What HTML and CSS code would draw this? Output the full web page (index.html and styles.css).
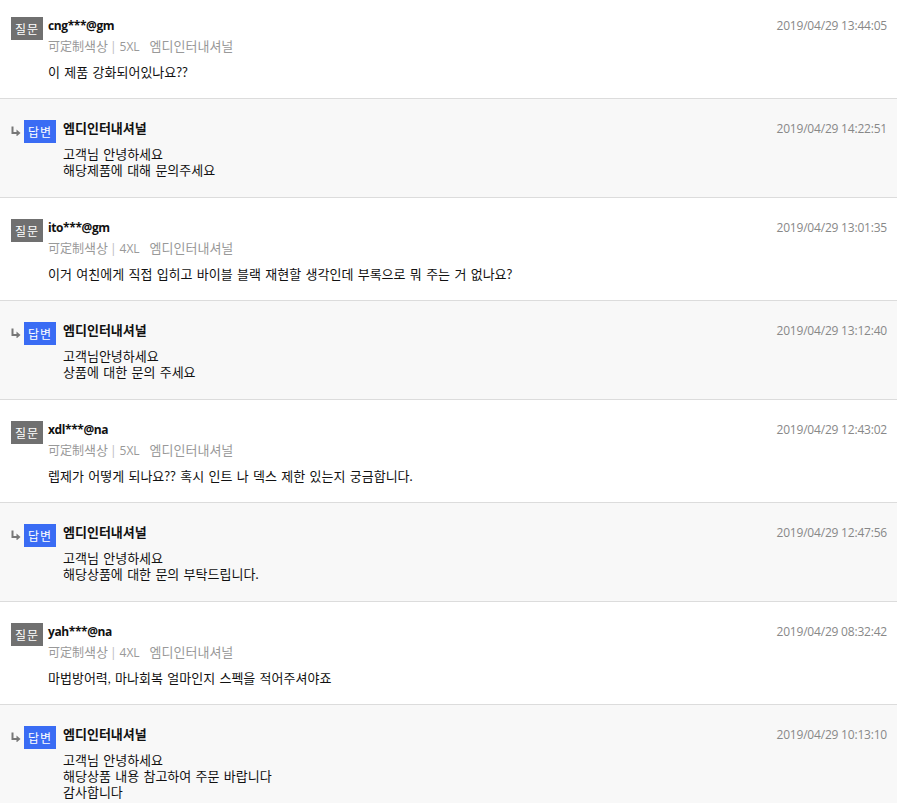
FILE: index.html
```html
<!DOCTYPE html>
<html lang="ko">
<head>
<meta charset="utf-8">
<title>Q&amp;A</title>
<link rel="stylesheet" href="styles.css">
</head>
<body>
<ul class="qna-list">
  <li class="item question">
    <span class="badge badge-q">질문</span>
    <div class="body">
      <div class="head"><span class="user">cng***@gm</span><span class="date">2019/04/29 13:44:05</span></div>
      <div class="meta">可定制<span class="ko">색상</span><span class="bar">|</span><span class="size">5XL</span><span class="ko brand">엠디인터내셔널</span></div>
      <p class="content">이 제품 강화되어있나요??</p>
    </div>
  </li>
  <li class="item answer">
    <span class="arrow"><svg width="10" height="10" viewBox="0 0 10 10"><path d="M1.5 0.5V7H6" fill="none" stroke="#777" stroke-width="2"/><path d="M5.5 3.5L9.5 7L5.5 10.5Z" fill="#777"/></svg></span>
    <span class="badge badge-a">답변</span>
    <div class="body">
      <div class="head"><span class="user">엠디인터내셔널</span><span class="date">2019/04/29 14:22:51</span></div>
      <p class="content">고객님 안녕하세요<br>해당제품에 대해 문의주세요</p>
    </div>
  </li>
  <li class="item question">
    <span class="badge badge-q">질문</span>
    <div class="body">
      <div class="head"><span class="user">ito***@gm</span><span class="date">2019/04/29 13:01:35</span></div>
      <div class="meta">可定制<span class="ko">색상</span><span class="bar">|</span><span class="size">4XL</span><span class="ko brand">엠디인터내셔널</span></div>
      <p class="content">이거 여친에게 직접 입히고 바이블 블랙 재현할 생각인데 부록으로 뭐 주는 거 없나요?</p>
    </div>
  </li>
  <li class="item answer">
    <span class="arrow"><svg width="10" height="10" viewBox="0 0 10 10"><path d="M1.5 0.5V7H6" fill="none" stroke="#777" stroke-width="2"/><path d="M5.5 3.5L9.5 7L5.5 10.5Z" fill="#777"/></svg></span>
    <span class="badge badge-a">답변</span>
    <div class="body">
      <div class="head"><span class="user">엠디인터내셔널</span><span class="date">2019/04/29 13:12:40</span></div>
      <p class="content">고객님안녕하세요<br>상품에 대한 문의 주세요</p>
    </div>
  </li>
  <li class="item question">
    <span class="badge badge-q">질문</span>
    <div class="body">
      <div class="head"><span class="user">xdl***@na</span><span class="date">2019/04/29 12:43:02</span></div>
      <div class="meta">可定制<span class="ko">색상</span><span class="bar">|</span><span class="size">5XL</span><span class="ko brand">엠디인터내셔널</span></div>
      <p class="content">렙제가 어떻게 되나요?? 혹시 인트 나 덱스 제한 있는지 궁금합니다.</p>
    </div>
  </li>
  <li class="item answer">
    <span class="arrow"><svg width="10" height="10" viewBox="0 0 10 10"><path d="M1.5 0.5V7H6" fill="none" stroke="#777" stroke-width="2"/><path d="M5.5 3.5L9.5 7L5.5 10.5Z" fill="#777"/></svg></span>
    <span class="badge badge-a">답변</span>
    <div class="body">
      <div class="head"><span class="user">엠디인터내셔널</span><span class="date">2019/04/29 12:47:56</span></div>
      <p class="content">고객님 안녕하세요<br>해당상품에 대한 문의 부탁드립니다.</p>
    </div>
  </li>
  <li class="item question">
    <span class="badge badge-q">질문</span>
    <div class="body">
      <div class="head"><span class="user">yah***@na</span><span class="date">2019/04/29 08:32:42</span></div>
      <div class="meta">可定制<span class="ko">색상</span><span class="bar">|</span><span class="size">4XL</span><span class="ko brand">엠디인터내셔널</span></div>
      <p class="content">마법방어력, 마나회복 얼마인지 스펙을 적어주셔야죠</p>
    </div>
  </li>
  <li class="item answer">
    <span class="arrow"><svg width="10" height="10" viewBox="0 0 10 10"><path d="M1.5 0.5V7H6" fill="none" stroke="#777" stroke-width="2"/><path d="M5.5 3.5L9.5 7L5.5 10.5Z" fill="#777"/></svg></span>
    <span class="badge badge-a">답변</span>
    <div class="body">
      <div class="head"><span class="user">엠디인터내셔널</span><span class="date">2019/04/29 10:13:10</span></div>
      <p class="content">고객님 안녕하세요<br>해당상품 내용 참고하여 주문 바랍니다<br>감사합니다</p>
    </div>
  </li>
</ul>
</body>
</html>
```
FILE: styles.css
```css
html, body {
  margin: 0;
  padding: 0;
  background: #fff;
}
body {
  font-family: "Open Sans", "Noto Sans CJK KR", sans-serif;
  font-size: 12px;
  color: #111;
  overflow: hidden;
}
.qna-list {
  list-style: none;
  margin: 0;
  padding: 0;
}
.item {
  display: flex;
  align-items: flex-start;
  box-sizing: border-box;
  padding: 21px 10px 0 11px;
  border-bottom: 1px solid #dcdcdc;
}
.question {
  height: 103px;
  background: #fff;
}
.question:first-child {
  height: 99px;
  padding-top: 17px;
}
.answer {
  height: 99px;
  background: #f8f8f8;
}
.arrow {
  display: flex;
  width: 13px;
  padding-top: 6px;
}
.badge {
  flex: none;
  display: flex;
  align-items: center;
  justify-content: center;
  width: 32px;
  height: 23px;
  color: #fff;
  font-size: 12px;
  letter-spacing: 1px;
}
.badge-q {
  background: #707070;
  margin-right: 5px;
}
.badge-a {
  background: #3a6cf4;
  margin-right: 7px;
}
.body {
  flex: 1;
  min-width: 0;
}
.head {
  display: flex;
  justify-content: space-between;
  align-items: baseline;
  line-height: 17px;
}
.user {
  font-weight: bold;
  color: #111;
}
.question .user {
  letter-spacing: -0.4px;
}
.answer .user {
  font-size: 13px;
}
.date {
  color: #888;
  letter-spacing: -0.2px;
}
.meta {
  margin-top: 2px;
  color: #999;
  font-size: 12px;
  line-height: 20px;
}
.ko {
  font-size: 13px;
}
.bar {
  margin: 0 3px 0 2px;
  color: #bbb;
}
.brand {
  margin-left: 10px;
}
.content {
  font-family: "Lato", "Noto Sans CJK KR", sans-serif;
  font-size: 13px;
  line-height: 16px;
  word-spacing: 1px;
}
.question .content {
  margin: 7px 0 0;
}
.answer .content {
  margin: 9px 0 0;
}
```
